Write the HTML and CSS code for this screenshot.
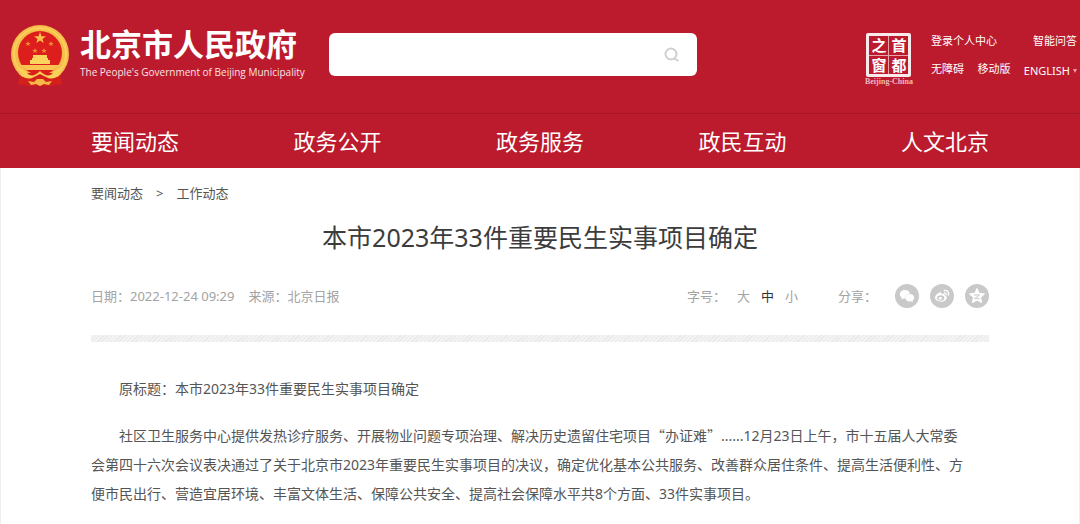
FILE: index.html
```
<!DOCTYPE html>
<html lang="zh-CN">
<head>
    <meta charset="UTF-8">
    <meta name="viewport" content="width=device-width, initial-scale=1.0">
    <title>本市2023年33件重要民生实事项目确定</title>
    <link rel="stylesheet" href="styles.css">
</head>
<body>
    <header class="header">
        <div class="top">
            <a class="logo" href="#">
                <svg class="emblem" viewBox="0 0 60 62" aria-hidden="true">
                    <path d="M7 46l3 6-2 8q7 2 11-2l3-3h16l3 3q4 4 11 2l-2-8 3-6z" fill="#d8201b"/>
                    <circle cx="30" cy="30" r="29" fill="#f6bd4c"/>
                    <path d="M10 54l6-2h28l6 2-6 8H16z" fill="#d3201b"/>
                    <circle cx="30" cy="30" r="26" fill="none" stroke="#fbd05a" stroke-width="2"/>
                    <path d="M12 54l6-5h24l6 5-6 8H18z" fill="#d3201b"/>
                    <circle cx="30" cy="29" r="22" fill="#dc1f1c"/>
                    <path d="M30 8l1.500 4.200h4.500l-3.500 2.700 1.200 4.200-3.700-2.500-3.700 2.500 1.200-4.200-3.500-2.700h4.500z" fill="#fbc04a"/>
                    <g fill="#f08a35">
                        <path id="star" d="M18 17l.8 1.900h2l-1.600 1.300.6 1.900-1.800-1.100-1.800 1.100.6-1.900-1.600-1.300h2z"/>
                        <use href="#star" x="23"/>
                        <use href="#star" x="7" y="7"/>
                        <use href="#star" x="16" y="7"/>
                    </g>
                    <path d="M20 36h2v-2h1v-3h14v3h1v2h2v4H20z" fill="#fbd45d"/>
                    <path d="M10 41h40l-6 5H16z" fill="#f8c350"/>
                    <path d="M9 43q5 2 9 7 5 4 12-3 7 7 12 3 4-5 9-7l-2 8q-5 5-11 3l-8-4-8 4q-6 2-11-3z" fill="#fbd05a"/>
                    <path d="M18 57l6 1 3-3h6l3 3 6-1-3 4-5-1-4 2-4-2-5 1z" fill="#f5b947"/>
                </svg>
                <span class="logo-text">
                    <strong>北京市人民政府</strong>
                    <span>The People's Government of Beijing Municipality</span>
                </span>
            </a>
            <form class="search">
                <input type="text" aria-label="搜索">
                <button type="submit" aria-label="搜索">
                    <svg width="16" height="16" viewBox="0 0 16 16" fill="none" stroke="#cfcfcf" stroke-width="2">
                        <circle cx="7" cy="7" r="5.500"/>
                        <path d="M10.500 11.500l4 2.500"/>
                    </svg>
                </button>
            </form>
            <a class="seal" href="#">
                <span class="seal-box">
                    <span>之</span><span>首</span><span>窗</span><span>都</span>
                </span>
                <span class="seal-name">Beijing-China</span>
            </a>
            <div class="links">
                <div class="links-row">
                    <a href="#">登录个人中心</a>
                    <a href="#">智能问答</a>
                </div>
                <div class="links-row">
                    <a href="#">无障碍</a>
                    <a href="#">移动版</a>
                    <a class="english" href="#">ENGLISH<svg width="4" height="4" viewBox="0 0 4 4"><path d="M0 0h4L2 4z" fill="#f0a0a8"/></svg></a>
                </div>
            </div>
        </div>
        <nav class="nav">
            <a href="#">要闻动态</a>
            <a href="#">政务公开</a>
            <a href="#">政务服务</a>
            <a href="#">政民互动</a>
            <a href="#">人文北京</a>
        </nav>
    </header>
    <main class="content">
        <div class="crumbs">
            <a href="#">要闻动态</a>
            <span>&gt;</span>
            <a href="#">工作动态</a>
        </div>
        <h1>本市2023年33件重要民生实事项目确定</h1>
        <div class="meta">
            <span>日期：2022-12-24 09:29</span>
            <span>来源：北京日报</span>
            <div class="sizes">
                <span>字号：</span>
                <button type="button">大</button>
                <button type="button" class="active">中</button>
                <button type="button">小</button>
            </div>
            <div class="share">
                <span>分享：</span>
                <a href="#" aria-label="微信">
                    <svg viewBox="0 0 24 24">
                        <circle cx="12" cy="12" r="12" fill="#c9c9c9"/>
                        <path d="M10 6c-3 0-5.200 1.900-5.200 4.300 0 1.400.8 2.600 2 3.400l-.5 1.800 2.100-1.100 1.600.2c-.2-3 2-5.100 5-5.200C14.400 7.400 12.500 6 10 6z" fill="#fff"/>
                        <path d="M14.700 10.100c-2.500 0-4.500 1.600-4.500 3.700s2 3.700 4.500 3.700l1.400-.2 1.900 1-.5-1.600c1-.7 1.700-1.700 1.700-2.900 0-2.100-2-3.700-4.500-3.700z" fill="#fff"/>
                    </svg>
                </a>
                <a href="#" aria-label="微博">
                    <svg viewBox="0 0 24 24">
                        <circle cx="12" cy="12" r="12" fill="#c9c9c9"/>
                        <path d="M9.500 8.500c-2.500 1-4.500 3.400-4.500 5.300 0 2.400 2.700 3.900 5.800 3.900 3.500 0 6-1.900 6-4 0-1.300-1-2-2.200-2.300.4-1.600-.9-2-3.100-1.200.3-1.400-.4-2.200-2-1.700z" fill="#fff"/>
                        <ellipse cx="10.700" cy="14" rx="3.600" ry="2.700" fill="#c9c9c9"/>
                        <circle cx="10.300" cy="14.300" r="1.500" fill="#fff"/>
                        <path d="M14.300 6.500c3-.6 5 1.600 4.200 4.700M14.400 9c1.200-.2 2 .6 1.700 1.800" fill="none" stroke="#fff" stroke-width="1.300" stroke-linecap="round"/>
                    </svg>
                </a>
                <a href="#" aria-label="QQ空间">
                    <svg viewBox="0 0 24 24">
                        <circle cx="12" cy="12" r="12" fill="#c9c9c9"/>
                        <path d="M12 4.500l2.200 4.800 5.300.6-3.900 3.600 1 5.200-4.600-2.600-4.600 2.600 1-5.200-3.900-3.600 5.300-.6z" fill="#fff" stroke="#fff" stroke-linejoin="round"/>
                        <path d="M9 11h5.500l-4.800 3.600h5" fill="none" stroke="#c9c9c9"/>
                    </svg>
                </a>
            </div>
        </div>
        <div class="divider"></div>
        <article class="article">
            <p>原标题：本市2023年33件重要民生实事项目确定</p>
            <p>社区卫生服务中心提供发热诊疗服务、开展物业问题专项治理、解决历史遗留住宅项目<span class="quote">“办证难”</span>......12月23日上午，市十五届人大常委<br>会第四十六次会议表决通过了关于北京市2023年重要民生实事项目的决议，确定优化基本公共服务、改善群众居住条件、提高生活便利性、方<br>便市民出行、营造宜居环境、丰富文体生活、保障公共安全、提高社会保障水平共8个方面、33件实事项目。</p>
        </article>
    </main>
</body>
</html>
```
FILE: styles.css
```
* {
    box-sizing: border-box;
}
body {
    margin: 0;
    font-family: "Noto Sans", "Noto Sans CJK SC", sans-serif;
    background-color: #fff;
    color: #555;
}
a {
    color: inherit;
    text-decoration: none;
}
button {
    padding: 0;
    border: none;
    background: none;
    font: inherit;
    color: inherit;
    cursor: pointer;
}
.header {
    background-color: #bc1a2d;
    color: #fff;
}
.top {
    display: flex;
    align-items: center;
    height: 113px;
    padding: 0 3px 4px 10px;
}
.logo {
    display: flex;
    align-items: center;
    gap: 10px;
    width: 319px;
}
.emblem {
    width: 60px;
    height: 62px;
}
.logo-text {
    display: flex;
    flex-direction: column;
    white-space: nowrap;
    font-family: "Open Sans", sans-serif;
    font-size: 10px;
    line-height: 24px;
    color: #fbe3e5;
}
.logo-text strong {
    font-family: "Noto Sans CJK SC", sans-serif;
    font-size: 31px;
    line-height: 34px;
    color: #fff;
}
.search {
    display: flex;
    align-items: center;
    width: 368px;
    height: 43px;
    padding-right: 17px;
    background-color: #fff;
    border-radius: 6px;
}
.search input {
    flex: 1;
    height: 100%;
    padding: 0 15px;
    border: none;
    outline: none;
    background: none;
    font-size: 14px;
}
.search button {
    display: flex;
}
.seal {
    display: flex;
    flex-direction: column;
    align-items: center;
    margin-left: auto;
    padding-top: 10px;
}
.seal-box {
    display: grid;
    grid-template-columns: 1fr 1fr;
    gap: 1px;
    width: 45px;
    height: 44px;
    border: 3px solid #fbeaec;
    border-radius: 2px;
    background-color: #e8a3ab;
}
.seal-box span {
    background-color: #bc1a2d;
    font-size: 15px;
    font-weight: bold;
    line-height: 18px;
    text-align: center;
}
.seal-name {
    font-family: "Liberation Serif", serif;
    font-size: 8px;
    font-weight: bold;
    line-height: 9px;
    color: #f0b8be;
}
.links {
    width: 146px;
    margin-left: 18px;
    padding-top: 2px;
    font-size: 11px;
    line-height: 16px;
}
.links-row {
    display: flex;
    justify-content: space-between;
    align-items: center;
    white-space: nowrap;
}
.links-row + .links-row {
    margin-top: 10px;
}
.english {
    display: flex;
    align-items: center;
    gap: 3px;
    padding-top: 4px;
}
.nav {
    display: flex;
    justify-content: space-between;
    padding: 0 91px;
    border-top: 1px solid #a31727;
    font-size: 22px;
    line-height: 54px;
}
.content {
    min-height: 356px;
    padding: 0 90px;
    border: solid #eee;
    border-width: 0 1px;
}
.crumbs {
    display: flex;
    gap: 13px;
    padding-top: 15px;
    font-size: 13px;
    line-height: 20px;
}
h1 {
    margin: 16px 0 0;
    font-size: 25px;
    font-weight: normal;
    line-height: 36px;
    text-align: center;
    color: #3c3c3c;
}
.meta {
    display: flex;
    align-items: center;
    gap: 14px;
    margin-top: 29px;
    font-size: 13px;
    line-height: 24px;
    color: #a3a3a3;
}
.sizes {
    display: flex;
    gap: 11px;
    margin-left: auto;
}
.sizes .active {
    color: #333;
}
.share {
    display: flex;
    align-items: center;
    gap: 11px;
    margin-left: 26px;
}
.share span {
    margin-right: 7px;
}
.share svg {
    display: block;
    width: 24px;
    height: 24px;
}
.divider {
    height: 7px;
    margin-top: 27px;
    background: repeating-linear-gradient(135deg, #e9e9e9 0 1px, #f3f3f3 1px 3px);
}
.article {
    margin-top: 32px;
    font-size: 14px;
    line-height: 29px;
    white-space: nowrap;
}
.article p {
    margin: 0 0 18px;
    text-indent: 2em;
}
.quote {
    font-family: "Noto Sans CJK SC", sans-serif;
}
```
